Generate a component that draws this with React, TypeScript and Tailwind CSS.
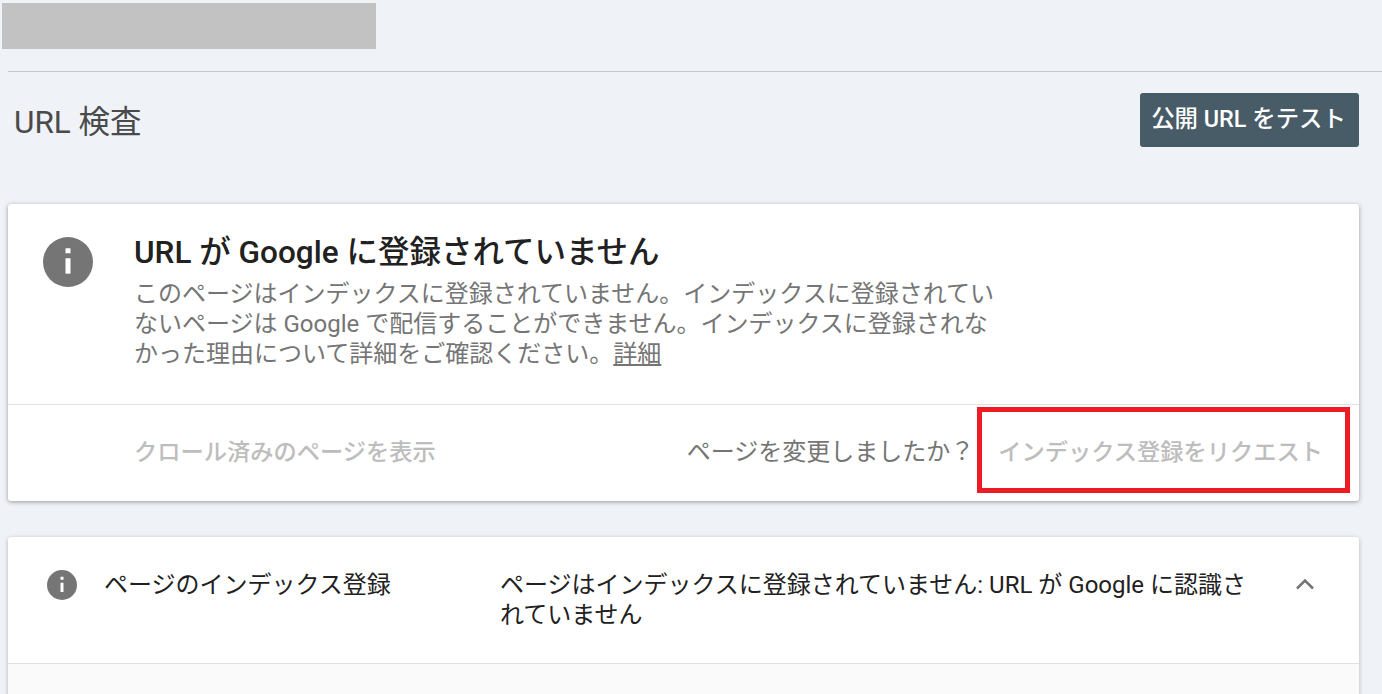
const font = "font-['Roboto','Noto_Sans_CJK_JP',sans-serif]";

const InfoIcon = ({ size }: { size: number }) => (
  <svg width={size} height={size} viewBox="0 0 24 24" className="shrink-0">
    <circle cx="12" cy="12" r="12" fill="#757575" />
    <rect x="10.8" y="10.2" width="2.4" height="7.4" fill="#fff" />
    <rect x="10.8" y="5.4" width="2.4" height="2.4" fill="#fff" />
  </svg>
);

export default function App() {
  return (
    <div className={`${font} h-[694px] w-[1382px] overflow-hidden bg-[#eff3f8]`}>
      {/* hidden property name */}
      <div className="ml-[2px] mt-[3px] h-[46px] w-[374px] bg-[#c2c2c2]" />

      <div className="ml-[8px] mt-[22px] h-px bg-[#c6c9cc]" />

      <div className="mt-[21px] flex items-center justify-between pl-[14px] pr-[23px]">
        <h1 className="pt-[5px] text-[31.5px] font-normal leading-[49px] text-[#4a4a4a]">URL 検査</h1>
        <button className="h-[54px] w-[219px] rounded-[3px] bg-[#485c68] pr-[2px] text-[23.4px] font-medium text-white">
          公開 URL をテスト
        </button>
      </div>

      <section className="ml-[8px] mt-[57px] w-[1351px] rounded-[3px] bg-white shadow-[0_1px_4px_rgba(60,64,67,0.5)]">
        <div className="flex h-[201px] border-b border-[#e0e0e0] pl-[35px] pt-[33px]">
          <InfoIcon size={50} />
          <div className="ml-[41px] w-[870px]">
            <h2 className="pt-[1px] text-[31.5px] font-medium leading-[30px] text-[#212121]">
              URL が Google に登録されていません
            </h2>
            <p className="mt-[11px] text-[24px] leading-[30px] text-[#757575]">
              このページはインデックスに登録されていません。インデックスに登録されていないページは Google で配信することができません。インデックスに登録されなかった理由について詳細をご確認ください。
              <span className="underline">詳細</span>
            </p>
          </div>
        </div>
        <div className="relative flex h-[96px] items-center pb-[2px] pl-[126px] text-[23.25px]">
          <span className="font-medium text-[#bdbdbd]">クロール済みのページを表示</span>
          <span className="ml-auto text-[24px] text-[#757575]">ページを変更しましたか？</span>
          <span className="ml-[24px] mr-[36px] font-medium text-[#bdbdbd]">インデックス登録をリクエスト</span>
          {/* red highlight drawn over the screenshot */}
          <div className="absolute left-[969px] top-[2px] h-[86px] w-[373px] border-[5px] border-[#ed1c24]" />
        </div>
      </section>

      <section className="ml-[8px] mt-[36px] w-[1351px] rounded-t-[3px] bg-white shadow-[0_1px_4px_rgba(60,64,67,0.35)]">
        <div className="flex h-[127px] border-b border-[#e0e0e0] pt-[33px] text-[24px] leading-[30px] text-[#212121]">
          <div className="ml-[39px]">
            <InfoIcon size={30} />
          </div>
          <div className="ml-[27px] w-[396px]">ページのインデックス登録</div>
          <div className="w-[760px]">ページはインデックスに登録されていません: URL が Google に認識されていません</div>
          <svg width="24" height="24" viewBox="0 0 24 24" className="ml-[33px] mt-[2px]" fill="none" stroke="#757575" strokeWidth="2.6">
            <path d="M4 16.5 12 8.5 20 16.5" />
          </svg>
        </div>
        <div className="h-[40px] bg-[#fafafa]" />
      </section>
    </div>
  );
}
